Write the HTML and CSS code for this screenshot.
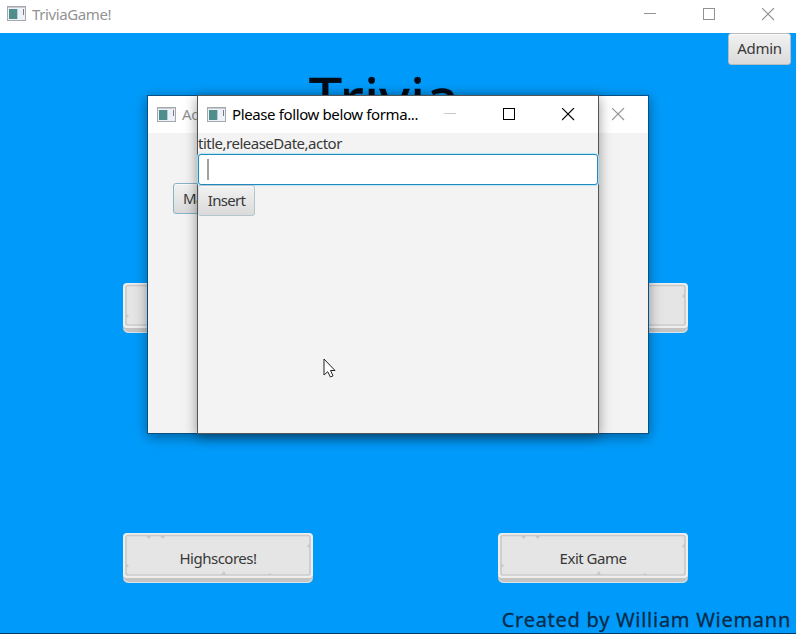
FILE: index.html
```html
<!DOCTYPE html>
<html lang="en">
<head>
<meta charset="utf-8">
<title>TriviaGame!</title>
<link rel="stylesheet" href="styles.css">
</head>
<body>
<svg class="defs" width="0" height="0">
  <symbol id="app" viewBox="0 0 19 16">
    <rect x=".5" y=".5" width="18" height="14" fill="#eef2f8" stroke="#a5a9ad"/>
    <path d="M1 1.5H18" stroke="#c8ccd0"/>
    <rect x="2" y="3" width="8" height="10" fill="#4f8f8b"/>
    <path d="M10.5 3V13" stroke="#b9cbd4"/>
    <path d="M16.5 3V9" stroke="#777c86"/>
  </symbol>
  <symbol id="min" viewBox="0 0 13 13"><path d="M0 5.5H12" stroke="currentColor"/></symbol>
  <symbol id="max" viewBox="0 0 13 13"><rect x=".5" y=".5" width="11" height="11" fill="none" stroke="currentColor"/></symbol>
  <symbol id="close" viewBox="0 0 13 13"><path d="M0 0L12 12M12 0L0 12" stroke="currentColor" stroke-width="1.1"/></symbol>
  <symbol id="plate" viewBox="0 0 190 50">
    <rect y="3" width="190" height="47" rx="5" fill="#c4c4c4"/>
    <path d="M1 46Q2 49.5 6 49.5H184Q188 49.5 189 46" fill="none" stroke="#d6e4ec"/>
    <rect width="190" height="45" rx="4" fill="#eeeeee"/>
    <rect x="3" y="2.5" width="184" height="39.5" rx="2" fill="#e5e5e5" stroke="#cbcbcb" stroke-width="1.7"/>
    <path d="M23 3h5l-2 3zM37 3h5l-2 3zM187 10v6l-3-3zM3 30v5l3-2zM98 42h5l-2-4zM145 42h4l-2-2z" fill="#c8c8c8"/>
  </symbol>
</svg>
<main class="game">
  <header class="titlebar inactive">
    <svg class="app"><use href="#app"/></svg>
    <span class="caption">TriviaGame!</span>
    <svg class="ctl"><use href="#min"/></svg>
    <svg class="ctl"><use href="#max"/></svg>
    <svg class="ctl"><use href="#close"/></svg>
  </header>
  <section class="board">
    <div class="top"><button class="btn admin">Admin</button></div>
    <h1><span>Trivia</span></h1>
    <div class="menu">
      <button class="plate"><svg><use href="#plate"/></svg></button>
      <button class="plate"><svg><use href="#plate"/></svg></button>
      <button class="plate"><svg><use href="#plate"/></svg><span>Highscores!</span></button>
      <button class="plate"><svg><use href="#plate"/></svg><span>Exit Game</span></button>
    </div>
    <footer><span>Created by William Wiemann</span></footer>
  </section>
</main>
<div class="window back">
  <header class="titlebar inactive">
    <svg class="app"><use href="#app"/></svg>
    <span class="caption">Ad</span>
    <svg class="ctl"><use href="#close"/></svg>
  </header>
  <div class="content"><button class="btn manage">Ma</button></div>
</div>
<div class="window front">
  <header class="titlebar">
    <svg class="app"><use href="#app"/></svg>
    <span class="caption">Please follow below forma...</span>
    <svg class="ctl off"><use href="#min"/></svg>
    <svg class="ctl"><use href="#max"/></svg>
    <svg class="ctl"><use href="#close"/></svg>
  </header>
  <div class="content form">
    <label for="entry">title,releaseDate,actor</label>
    <div class="field" id="entry"><i></i></div>
    <button class="btn insert">Insert</button>
  </div>
</div>
<svg class="cursor" viewBox="0 0 13 20"><path d="M1 1V17L4.7 13.7L7.4 19L10 17.8L7.5 12.5H12Z" fill="#fff" stroke="#222" stroke-width="1"/></svg>
</body>
</html>
```
FILE: styles.css
```css
* { box-sizing: border-box; }
body {
  margin: 0;
  width: 796px;
  height: 634px;
  overflow: hidden;
  font: 15px/20px "Noto Sans", "Open Sans", sans-serif;
  letter-spacing: -.5px;
  color: #383838;
}
.defs { position: absolute; }
button { font: inherit; letter-spacing: inherit; color: inherit; border: 0; padding: 0; margin: 0; }
svg { display: block; flex: none; }
.game { height: 634px; display: flex; flex-direction: column; }
.titlebar {
  display: flex;
  align-items: center;
  flex: none;
  height: 37px;
  padding: 0 23px 0 9px;
  background: #fff;
  color: #000;
}
.titlebar.inactive { color: #929292; }
.app { width: 19px; height: 16px; margin-right: 6px; }
.caption { flex: 1; min-width: 0; padding-bottom: 2px; white-space: nowrap; letter-spacing: -.38px; }
.ctl { width: 13px; height: 13px; }
.ctl + .ctl { margin-left: 46px; }
.ctl.off { color: #c8c8c8; }
.game > .titlebar { height: 33px; padding: 0 21px 5px 7px; }
.game > .titlebar .caption { padding-bottom: 0; }
.board {
  flex: 1;
  display: flex;
  flex-direction: column;
  background: #009bfa;
  border-bottom: 1px solid #053a5e;
}
.top { display: flex; justify-content: flex-end; padding-right: 5px; }
.btn {
  height: 31px;
  border: 1px solid #b9bcbe;
  border-radius: 3px;
  background: linear-gradient(#f2f2f2, #dadada);
  box-shadow: inset 0 1px #fafafa;
  white-space: nowrap;
}
.admin { width: 63px; height: 32px; padding-bottom: 2px; letter-spacing: -.3px; }
h1 {
  margin: 0 28px 0 0;
  height: 218px;
  font-size: 59px;
  font-weight: 400;
  line-height: 64px;
  letter-spacing: .4px;
  text-align: center;
  color: #000b16;
  -webkit-text-stroke: .6px #000b16;
}
.menu {
  display: grid;
  grid-template-columns: 190px 190px;
  gap: 200px 185px;
  padding-left: 123px;
}
.plate { display: grid; place-items: center; width: 190px; height: 50px; background: none; }
.plate > * { grid-area: 1 / 1; }
.plate svg { width: 190px; height: 50px; }
footer {
  flex: 1;
  display: flex;
  justify-content: flex-end;
  padding: 26px 5px 0 0;
  font-size: 20px;
  line-height: 22px;
  color: #062b4b;
  white-space: nowrap;
  letter-spacing: .73px;
  -webkit-text-stroke: .3px #062b4b;
}
.window {
  position: absolute;
  top: 95px;
  height: 339px;
  border: 1px solid #3b4850;
  background: #f3f3f3;
  box-shadow: 0 3px 12px rgba(0, 0, 0, .4);
}
.back { left: 147px; width: 502px; border-color: #075184; }
.front { left: 197px; width: 402px; border-color: #505558; }
.back .content { padding: 50px 25px; }
.manage { width: 82px; border-color: #87b2c7; padding: 0 0 1px 9px; text-align: left; }
.form { display: flex; flex-direction: column; align-items: flex-start; }
.form label { height: 21px; line-height: 21px; white-space: nowrap; }
.field {
  width: 400px;
  height: 31px;
  padding: 4px 8px;
  border: 1px solid #2089bd;
  border-radius: 3px;
  background: #fff;
  box-shadow: 0 0 1px 1px #bfe6f6;
}
.field i { display: block; width: 2px; height: 21px; background: #a0a0a0; }
.insert { width: 57px; padding-bottom: 1px; letter-spacing: -.7px; border-color: #b4c6cd; border-left-color: #d5dadd; }
.cursor { position: absolute; left: 323px; top: 358px; width: 13px; height: 20px; }
```
